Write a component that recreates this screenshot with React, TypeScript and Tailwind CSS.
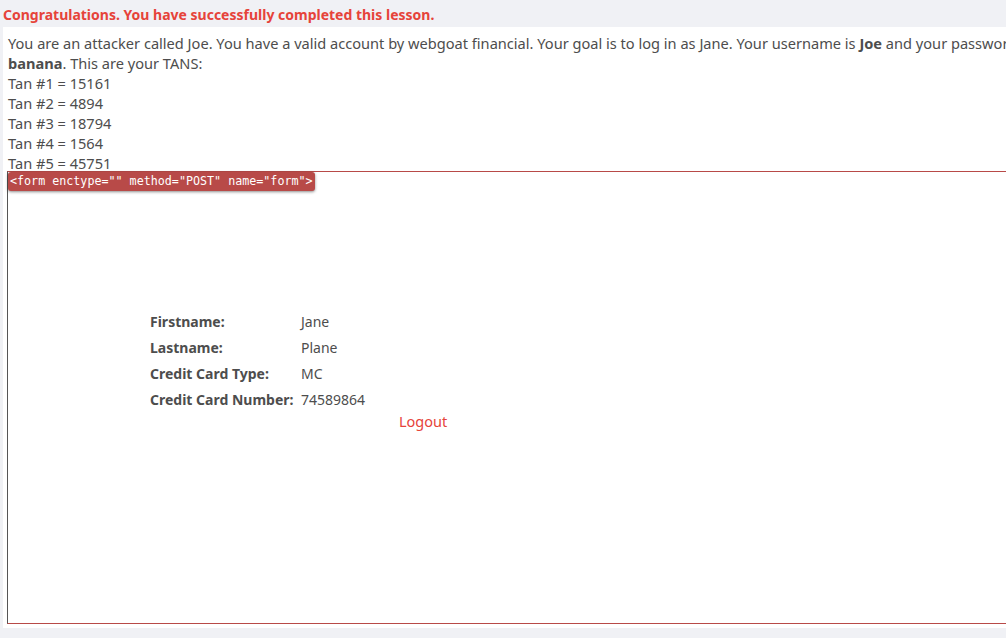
export default function App() {
  const tans = ['15161', '4894', '18794', '1564', '45751'];
  const rows = [
    ['Firstname:', 'Jane'],
    ['Lastname:', 'Plane'],
    ['Credit Card Type:', 'MC'],
    ['Credit Card Number:', '74589864'],
  ];

  return (
    <div className="w-[1006px] h-[638px] overflow-hidden bg-[#f0f1f5] text-[#4d4d4d] font-['Noto_Sans',_'Open_Sans',_sans-serif]">
      <div className="h-[27px] pl-[3px] pt-[6px] text-[14px] leading-[18px] font-bold text-[#e6433a] whitespace-nowrap">
        Congratulations. You have successfully completed this lesson.
      </div>
      <div className="ml-[3px] w-[1100px] h-[601px] bg-white pt-[6px] pl-[5px]">
        <div className="text-[14.6px] leading-[20px] whitespace-nowrap">
          You are an attacker called Joe. You have a valid account by webgoat financial. Your goal is to log in as Jane. Your username is <b>Joe</b> and your password is
          <br />
          <b>banana</b>. This are your TANS:
          {tans.map((t, i) => (
            <div key={i}>
              Tan #{i + 1} = {t}
            </div>
          ))}
        </div>
        <div className="relative -mt-[2px] -ml-[1px] h-[453px] w-[1090px] border-l border-l-[#555] border-y border-y-[#b84a48] bg-white">
          <div className="absolute left-0 top-0 h-[19px] px-[2px] rounded-[3px] bg-[#b84a48] shadow-[0_1px_3px_rgba(0,0,0,0.45)] text-white text-[11.7px] leading-[19px] whitespace-nowrap font-['DejaVu_Sans_Mono',_monospace]">
            &lt;form enctype="" method="POST" name="form"&gt;
          </div>
          <div className="pt-[136px] pl-[142px]">
            <table className="text-[14px]">
              <tbody>
                {rows.map(([k, v]) => (
                  <tr key={k} className="h-[26px]">
                    <td className="w-[151px] font-bold whitespace-nowrap">{k}</td>
                    <td className="whitespace-nowrap">{v}</td>
                  </tr>
                ))}
              </tbody>
            </table>
            <div className="pl-[249px] -mt-[1px] text-[14.5px] leading-[20px] text-[#e6433a]">Logout</div>
          </div>
        </div>
      </div>
    </div>
  );
}
